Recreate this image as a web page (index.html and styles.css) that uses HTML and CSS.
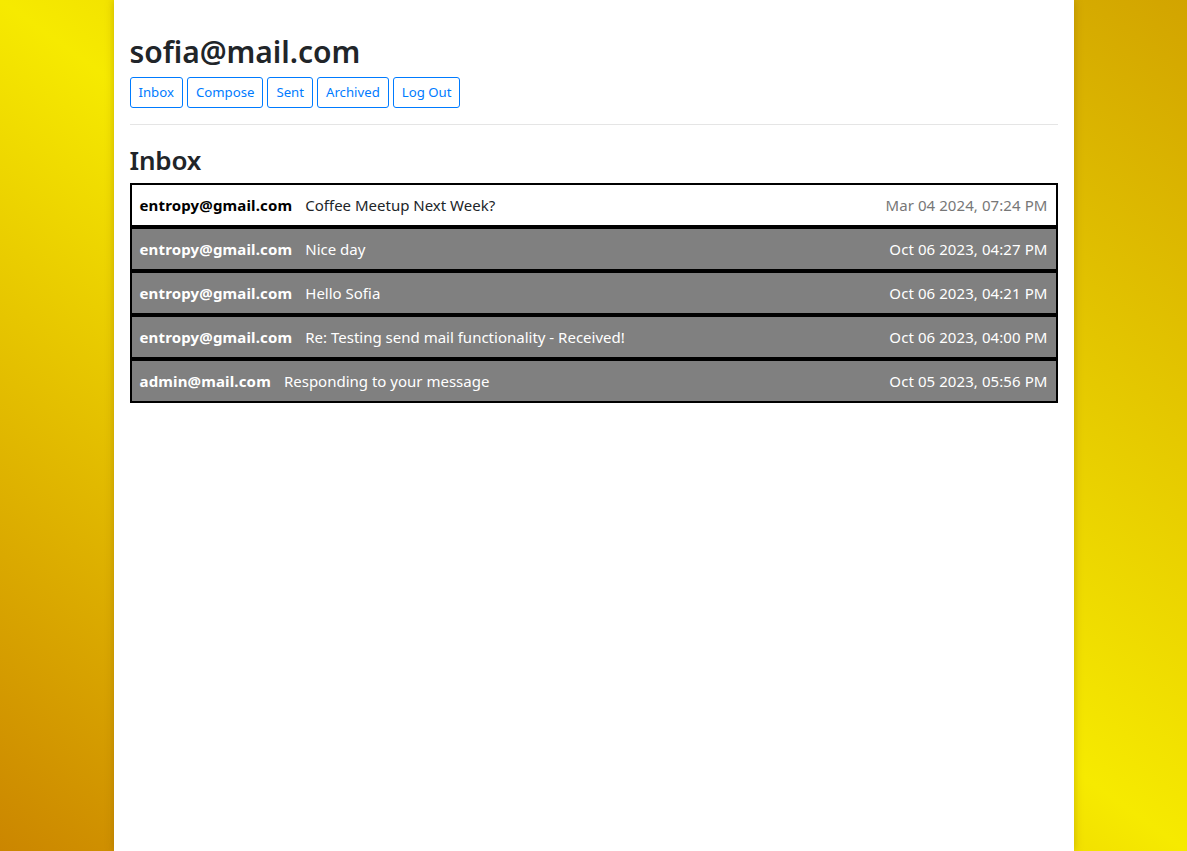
FILE: index.html
```html
<!DOCTYPE html>
<html lang="en">
<head>
<meta charset="utf-8">
<title>Mail</title>
<link rel="stylesheet" href="styles.css">
</head>
<body>
<div class="container">
  <h2 class="user">sofia@mail.com</h2>
  <nav class="nav">
    <button class="btn">Inbox</button>
    <button class="btn">Compose</button>
    <button class="btn">Sent</button>
    <button class="btn">Archived</button>
    <a class="btn" href="#">Log Out</a>
  </nav>
  <hr class="rule">
  <h3 class="title">Inbox</h3>
  <div class="list">
    <div class="mail unread">
      <span class="sender">entropy@gmail.com</span>
      <span class="subject">Coffee Meetup Next Week?</span>
      <span class="time">Mar 04 2024, 07:24 PM</span>
    </div>
    <div class="mail read">
      <span class="sender">entropy@gmail.com</span>
      <span class="subject">Nice day</span>
      <span class="time">Oct 06 2023, 04:27 PM</span>
    </div>
    <div class="mail read">
      <span class="sender">entropy@gmail.com</span>
      <span class="subject">Hello Sofia</span>
      <span class="time">Oct 06 2023, 04:21 PM</span>
    </div>
    <div class="mail read">
      <span class="sender">entropy@gmail.com</span>
      <span class="subject">Re: Testing send mail functionality - Received!</span>
      <span class="time">Oct 06 2023, 04:00 PM</span>
    </div>
    <div class="mail read">
      <span class="sender">admin@mail.com</span>
      <span class="subject">Responding to your message</span>
      <span class="time">Oct 05 2023, 05:56 PM</span>
    </div>
  </div>
</div>
</body>
</html>
```
FILE: styles.css
```css
html, body {
  height: 100%;
}
body {
  margin: 0;
  font-family: "Noto Sans", "Open Sans", sans-serif;
  font-size: 16px;
  line-height: 1.5;
  color: #212529;
  background: linear-gradient(to top right, #cb8600 0%, #f6ea00 50%, #d2a400 100%);
}
.container {
  width: 960px;
  box-sizing: border-box;
  margin: 0 auto;
  min-height: 100%;
  background: #fff;
  padding: 34px 16px 16px;
  box-shadow: 0 0 8px rgba(120, 80, 0, 0.35);
}
.user {
  margin: 0 0 7px;
  font-size: 30px;
  font-weight: 600;
  line-height: 1.2;
  letter-spacing: -0.05px;
}
.nav {
  display: flex;
  gap: 4px;
}
.btn {
  font: inherit;
  font-size: 13.2px;
  line-height: 20px;
  color: #007bff;
  background: #fff;
  border: 1px solid #007bff;
  border-radius: 3px;
  padding: 4px 8px 5px;
  text-decoration: none;
  cursor: pointer;
}
.rule {
  margin: 16px 0 20px;
  border: 0;
  border-top: 1px solid rgba(0, 0, 0, 0.1);
}
.title {
  margin: 0 0 7px;
  font-size: 26px;
  font-weight: 600;
  line-height: 1.2;
  letter-spacing: -0.2px;
}
.mail {
  display: flex;
  align-items: center;
  border: 2px solid #000;
  padding: 0 8px;
  height: 40px;
  box-sizing: content-box;
  font-size: 15px;
}
.mail .sender {
  font-weight: 700;
  margin-right: 13px;
  letter-spacing: 0.15px;
}
.mail .time {
  margin-left: auto;
  letter-spacing: 0.08px;
}
.unread {
  background: #fff;
  color: #000;
}
.unread .subject {
  color: #212529;
}
.unread .time {
  color: #777;
}
.read {
  background: #808080;
  color: #fff;
}
```
